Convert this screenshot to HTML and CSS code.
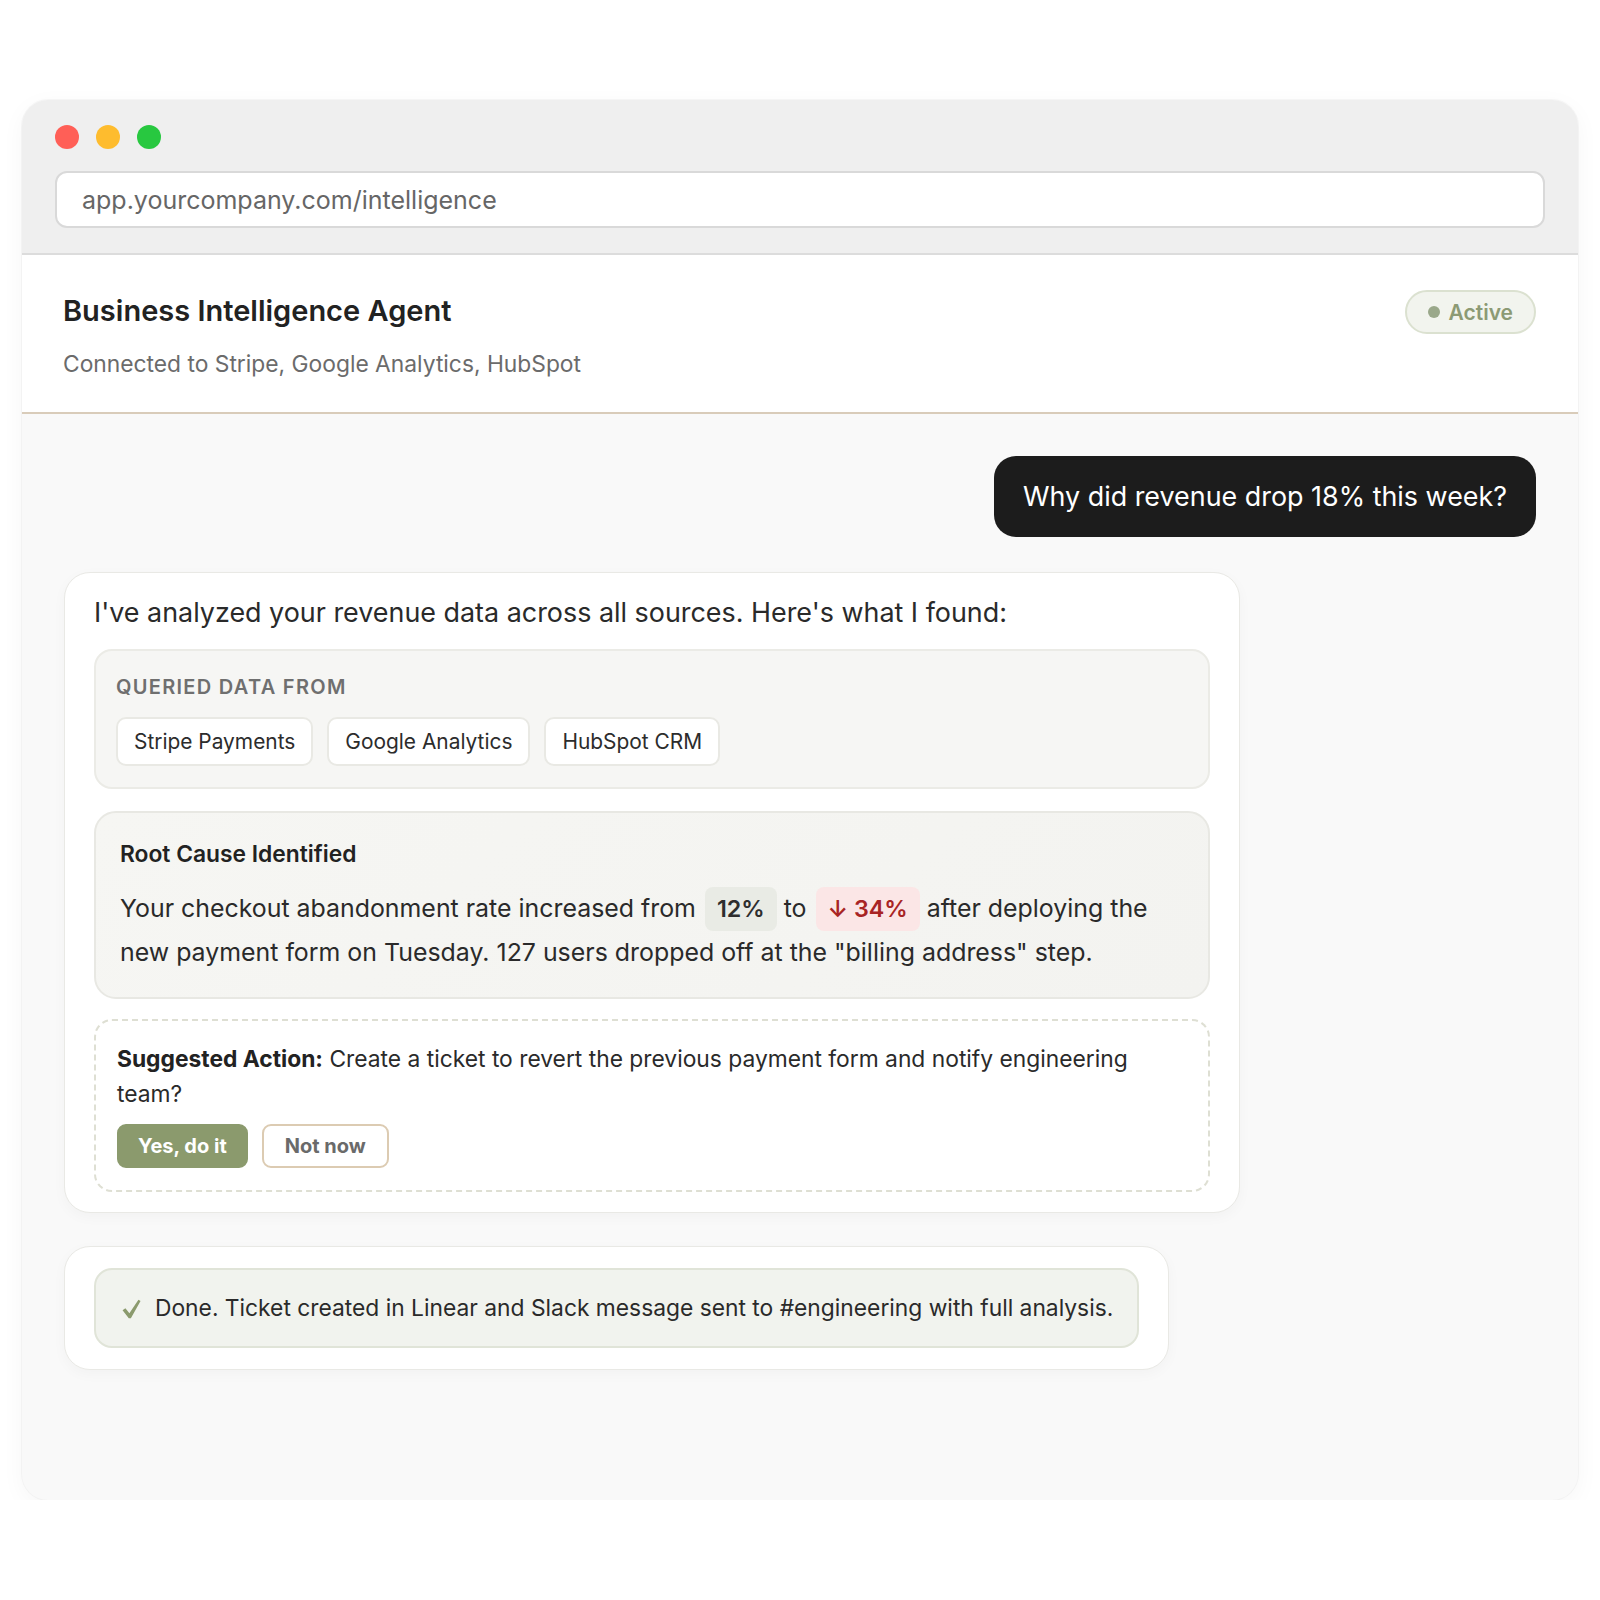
FILE: index.html
```html
<!DOCTYPE html>
<html lang="en">
<head>
<meta charset="utf-8">
<title>Business Intelligence Agent</title>
<link rel="stylesheet" href="styles.css">
</head>
<body>
<div class="window">
  <div class="titlebar">
    <div class="dots">
      <span class="dot red"></span>
      <span class="dot yellow"></span>
      <span class="dot green"></span>
    </div>
    <div class="url">app.yourcompany.com/intelligence</div>
  </div>
  <div class="header">
    <div class="header-text">
      <h1 class="title">Business Intelligence Agent</h1>
      <p class="subtitle">Connected to Stripe, Google Analytics, HubSpot</p>
    </div>
    <div class="badge"><span class="badge-dot"></span>Active</div>
  </div>
  <div class="chat">
    <div class="user-msg">Why did revenue drop 18% this week?</div>
    <div class="agent-card">
      <p class="intro">I've analyzed your revenue data across all sources. Here's what I found:</p>
      <div class="sources">
        <div class="sources-label">QUERIED DATA FROM</div>
        <div class="chips">
          <span class="chip">Stripe Payments</span>
          <span class="chip">Google Analytics</span>
          <span class="chip">HubSpot CRM</span>
        </div>
      </div>
      <div class="cause">
        <div class="cause-title">Root Cause Identified</div>
        <p class="cause-text">Your checkout abandonment rate increased from <span class="stat">12%</span> to <span class="stat stat-bad">↓ 34%</span> after deploying the new payment form on Tuesday. 127 users dropped off at the "billing address" step.</p>
      </div>
      <div class="action">
        <p class="action-text"><strong>Suggested Action:</strong> Create a ticket to revert the previous payment form and notify engineering team?</p>
        <div class="buttons">
          <button class="btn btn-primary">Yes, do it</button>
          <button class="btn btn-secondary">Not now</button>
        </div>
      </div>
    </div>
    <div class="done-card">
      <div class="done">
        <svg class="check" width="19" height="20" viewBox="0 0 18 19" aria-hidden="true"><path d="M0.5 10.8 L3.2 8.9 L7 13.6 L15.6 0.8 L17.6 2 L8.4 18.4 L6.4 18.4 Z" fill="#8b9a6d"/></svg>
        <span>Done. Ticket created in Linear and Slack message sent to #engineering with full analysis.</span>
      </div>
    </div>
  </div>
</div>
</body>
</html>
```

FILE: styles.css
```css
* { box-sizing: border-box; }

html, body {
  margin: 0;
  background: #ffffff;
}

body {
  padding: 100px 22px 0;
  font-family: Inter, "Liberation Sans", sans-serif;
  color: #2a2a2a;
}

.window {
  width: 1556px;
  border-radius: 26px;
  overflow: hidden;
  background: #f9f9f9;
  box-shadow: 0 0 0 1px rgba(0, 0, 0, 0.03), 0 6px 24px rgba(0, 0, 0, 0.04);
}

.titlebar {
  background: #efefef;
  padding: 25px 33px 25px;
  border-bottom: 2px solid #dcdcdc;
  display: flex;
  flex-direction: column;
  gap: 22px;
}

.dots {
  display: flex;
  gap: 17px;
}

.dot {
  width: 24px;
  height: 24px;
  border-radius: 50%;
}
.dot.red { background: #ff5f57; }
.dot.yellow { background: #febc2e; }
.dot.green { background: #28c840; }

.url {
  background: #ffffff;
  border: 2px solid #d9d9d9;
  border-radius: 12px;
  height: 57px;
  padding: 0 25px;
  display: flex;
  align-items: center;
  font-size: 25px;
  color: #666666;
}

.header {
  background: #ffffff;
  border-bottom: 2px solid #d9ccba;
  padding: 36px 42px 31px 41px;
  display: flex;
  justify-content: space-between;
  align-items: flex-start;
}

.title {
  margin: 0;
  font-size: 29px;
  font-weight: 600;
  color: #222222;
  line-height: 40px;
}

.subtitle {
  margin: 16px 0 0;
  font-size: 22.8px;
  color: #6b6b6b;
  line-height: 34px;
}

.badge {
  display: flex;
  align-items: center;
  gap: 9px;
  height: 44px;
  margin-top: -1px;
  padding: 0 21px;
  border-radius: 22px;
  background: #f2f4ee;
  border: 2px solid #dbe1d0;
  color: #8c9a74;
  font-size: 21px;
  font-weight: 600;
}

.badge-dot {
  width: 12px;
  height: 12px;
  border-radius: 50%;
  background: #9aa88a;
}

.chat {
  min-height: 1086px;
  padding: 42px 42px 40px 42px;
  display: flex;
  flex-direction: column;
  align-items: flex-start;
  gap: 35px;
}

.user-msg {
  align-self: flex-end;
  background: #1c1c1c;
  color: #ffffff;
  font-size: 26.9px;
  line-height: 37px;
  padding: 22px 29px;
  border-radius: 22px;
}

.agent-card {
  width: 1176px;
  background: #ffffff;
  border: 1px solid #e9e9e5;
  border-radius: 26px;
  padding: 20px 29px 20px;
  box-shadow: 0 4px 14px rgba(0, 0, 0, 0.03);
  display: flex;
  flex-direction: column;
  gap: 22px;
}

.intro {
  margin: 0 0 -4px;
  font-size: 26.9px;
  line-height: 38px;
  color: #2a2a2a;
}

.sources {
  background: #f6f6f4;
  border: 2px solid #ebebe6;
  border-radius: 18px;
  padding: 23px 20px 21px;
}

.sources-label {
  font-size: 20px;
  font-weight: 600;
  letter-spacing: 1.3px;
  color: #6f6f6f;
  line-height: 26px;
}

.chips {
  display: flex;
  gap: 14px;
  margin-top: 17px;
}

.chip {
  background: #ffffff;
  border: 2px solid #e9e9e4;
  border-radius: 10px;
  height: 49px;
  padding: 0 16px;
  display: flex;
  align-items: center;
  font-size: 20.9px;
  color: #2c2c2c;
}

.cause {
  background: linear-gradient(135deg, #f6f6f3, #f3f3f0);
  border: 2px solid #e8e8e3;
  border-radius: 22px;
  padding: 26px 24px 23px;
}

.cause-title {
  font-size: 22.8px;
  font-weight: 600;
  color: #222222;
  line-height: 30px;
}

.cause-text {
  margin: 18px 0 0;
  font-size: 24.9px;
  line-height: 43px;
  color: #2a2a2a;
}

.stat {
  display: inline-block;
  background: #e9ebe5;
  border-radius: 8px;
  padding: 0 12px;
  margin-left: 2px;
  font-size: 23.3px;
  font-weight: 600;
  line-height: 44px;
  color: #2e2e2e;
}

.stat-bad {
  background: #fbe6e6;
  color: #a82424;
}

.action {
  background: #ffffff;
  border: 2px dashed #dedfd3;
  border-radius: 18px;
  padding: 20px 21px 22px;
  margin-top: -2px;
}

.action-text {
  margin: 0;
  font-size: 22.8px;
  line-height: 35px;
  color: #2a2a2a;
}

.action-text strong {
  font-weight: 700;
  color: #222222;
}

.buttons {
  display: flex;
  gap: 14px;
  margin-top: 13px;
}

.btn {
  font-family: Inter, "Liberation Sans", sans-serif;
  font-size: 20px;
  font-weight: 700;
  height: 44px;
  padding: 0 19px;
  border-radius: 9px;
  cursor: pointer;
}

.btn-primary {
  background: #8b9a6d;
  color: #ffffff;
  border: 2px solid #8b9a6d;
}

.btn-secondary {
  background: #ffffff;
  color: #6a6a6a;
  border: 2px solid #dccbb2;
  padding: 0 21px;
}

.done-card {
  margin-top: -2px;
  background: #ffffff;
  border: 1px solid #e9e9e5;
  border-radius: 26px;
  padding: 21px 29px;
  box-shadow: 0 4px 14px rgba(0, 0, 0, 0.03);
}

.done {
  display: flex;
  align-items: center;
  gap: 14px;
  background: #f1f3ee;
  border: 2px solid #e0e4d8;
  border-radius: 18px;
  padding: 22px 24px 22px 26px;
  font-size: 22.8px;
  line-height: 32px;
  color: #2a2a2a;
}

.check {
  flex: none;
  margin-top: 2px;
}
```
